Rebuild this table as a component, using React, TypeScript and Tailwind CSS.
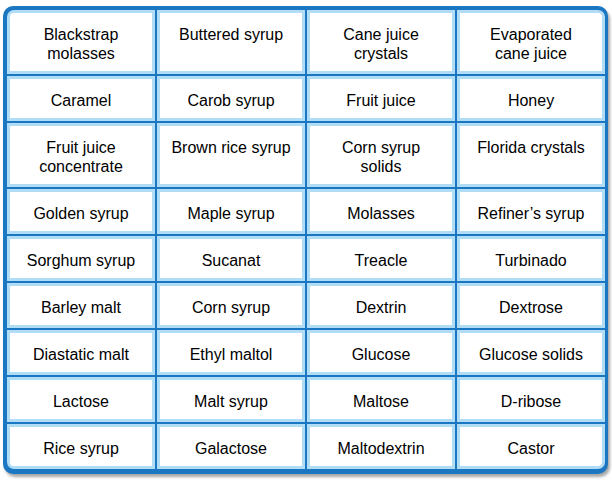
import React from "react";

const rows: string[][] = [
  ["Blackstrap\nmolasses", "Buttered syrup", "Cane juice\ncrystals", "Evaporated\ncane juice"],
  ["Caramel", "Carob syrup", "Fruit juice", "Honey"],
  ["Fruit juice\nconcentrate", "Brown rice syrup", "Corn syrup\nsolids", "Florida crystals"],
  ["Golden syrup", "Maple syrup", "Molasses", "Refiner\u2019s syrup"],
  ["Sorghum syrup", "Sucanat", "Treacle", "Turbinado"],
  ["Barley malt", "Corn syrup", "Dextrin", "Dextrose"],
  ["Diastatic malt", "Ethyl maltol", "Glucose", "Glucose solids"],
  ["Lactose", "Malt syrup", "Maltose", "D-ribose"],
  ["Rice syrup", "Galactose", "Maltodextrin", "Castor"],
];

export default function App() {
  return (
    <div className="w-[612px] h-[484px] bg-white pt-[6px] pl-[3px]" style={{ fontFamily: '"Liberation Sans", Arial, sans-serif' }}>
      <div className="w-[605px] rounded-[10px] bg-[#1b77c1] pt-[4px] pb-[5px] pl-[4px] pr-[3px] shadow-[2px_3px_3px_rgba(0,0,0,0.35)]">
        <div className="grid grid-cols-4 gap-[2px]">
          {rows.flat().map((t, i) => (
            <div
              key={i}
              className={
                "bg-white border-[3px] border-[#b0dcf5] pt-[12px] pb-[8px] px-1 text-center text-[16px] leading-[19px] text-black whitespace-pre-line " +
                (i === 0 ? "rounded-tl-[7px] " : "") +
                (i === 3 ? "rounded-tr-[7px] " : "") +
                (i === 32 ? "rounded-bl-[7px] " : "") +
                (i === 35 ? "rounded-br-[7px] " : "")
              }
            >
              {t}
            </div>
          ))}
        </div>
      </div>
    </div>
  );
}
